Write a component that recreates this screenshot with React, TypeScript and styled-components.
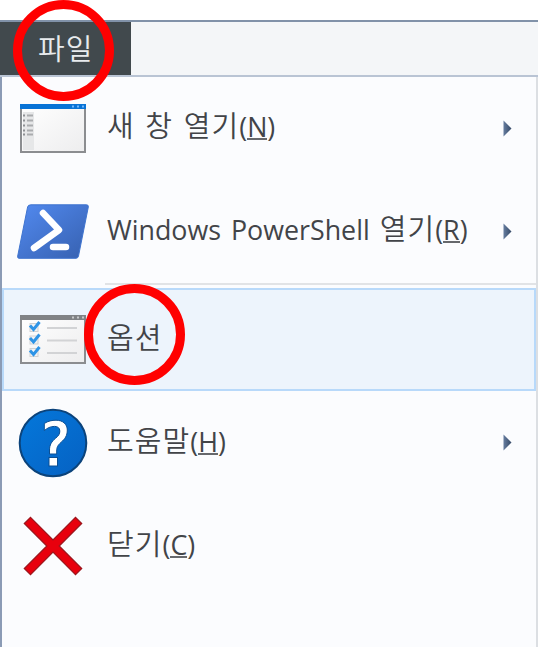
import React from "react";
import styled, { createGlobalStyle } from "styled-components";

const GlobalStyle = createGlobalStyle`
  * { box-sizing: border-box; }
  html, body { margin: 0; background: #fff; overflow: hidden; }
`;

const Window = styled.div`
  width: 538px;
  height: 647px;
  padding-top: 20px;
  display: flex;
  flex-direction: column;
  background: #fff;
  overflow: hidden;
  color: #424448;
  font-family: "Open Sans", "Noto Sans CJK KR", sans-serif;
`;

const TabBar = styled.div`
  height: 57px;
  flex: none;
  display: flex;
  border-top: 2px solid #8192a9;
  border-bottom: 2px solid #b9c4d4;
  background: #f4f6f8;
`;

const FileTab = styled.div`
  position: relative;
  width: 131px;
  display: flex;
  align-items: center;
  padding: 0 0 3px 38px;
  background: #41494d;
  color: #e8ebed;
`;

const Menu = styled.div`
  flex: 1;
  display: flex;
  flex-direction: column;
  border-left: 2px solid #8b9bb5;
  border-right: 2px solid #dcdfe3;
  background: #fbfcfe;
`;

const Item = styled.div<{ $selected?: boolean; $height?: number }>`
  position: relative;
  flex: none;
  height: ${(p) => p.$height ?? 103}px;
  display: grid;
  grid-template-columns: 103px 1fr 31px;
  align-items: center;
  border: 2px solid ${(p) => (p.$selected ? "#b8d9fa" : "transparent")};
  background: ${(p) => (p.$selected ? "#edf4fc" : "transparent")};
`;

const IconCell = styled.div`
  display: flex;
  justify-content: center;
  align-items: center;
  width: 98px;
  svg { display: block; flex: none; }
`;

const Label = styled.div`
  display: flex;
  align-items: baseline;
  white-space: pre;
  line-height: 40px;
  height: 40px;
  word-spacing: 3px;
`;

const ItemLabel = styled(Label)`
  margin-bottom: 8px;
`;

const Hangul = styled.span`
  font-family: "Noto Sans CJK KR", sans-serif;
  font-size: 29px;
  font-weight: 350;
  letter-spacing: 1.1px;
`;

const Latin = styled.span`
  font-size: 26.8px;
  font-weight: 400;
`;

const AccessKey = styled.span`
  display: inline-block;
  line-height: 23px;
  border-bottom: 2px solid #66686c;
`;

const Separator = styled.div`
  flex: none;
  height: 2px;
  margin: 0 0 3px 103px;
  background: #e1e3e6;
`;

const Ring = styled.div<{ $left: number; $top: number; $size: number }>`
  position: absolute;
  z-index: 2;
  left: ${(p) => p.$left}px;
  top: ${(p) => p.$top}px;
  width: ${(p) => p.$size}px;
  height: ${(p) => p.$size}px;
  border: 9px solid #ff0000;
  border-radius: 50%;
`;

const WindowIcon = () => (
  <svg width="66" height="49" viewBox="0 0 66 49">
    <defs>
      <linearGradient id="pane" x1="0" y1="0" x2="1" y2="1">
        <stop offset="0" stopColor="#fff" />
        <stop offset="1" stopColor="#ededee" />
      </linearGradient>
    </defs>
    <rect x="1" y="1" width="64" height="47" fill="url(#pane)" stroke="#8b8d90" strokeWidth="2" />
    <rect x="3" y="8" width="11" height="38" fill="#e6e7e8" />
    <rect width="66" height="5" fill="#0873d6" />
    <path d="M52 2.5h2M57 2.5h2M62 2.5h2" stroke="#70b8ff" strokeWidth="2" />
    <path d="M3 11.5h2M3 16.5h2M3 21.5h2M3 26.5h2M3 30.5h2" stroke="#8d9093" strokeWidth="2" />
    <path d="M7 11.5h6M7 16.5h6M7 21.5h6M7 26.5h6M7 30.5h6" stroke="#aaacae" strokeWidth="2" />
  </svg>
);

const ShellIcon = () => (
  <svg width="72" height="55" viewBox="0 0 72 55">
    <defs>
      <linearGradient id="shell" x1="0" y1="0" x2="1" y2="1">
        <stop offset="0" stopColor="#528af0" />
        <stop offset="1" stopColor="#3660af" />
      </linearGradient>
    </defs>
    <path d="M14 .8H69.5Q71.7.8 71.3 3L61.5 52Q61 54.3 59 54.3H2Q.3 54.3.7 52L10.6 3Q11 .8 14 .8Z" fill="url(#shell)" stroke="#3f74cf" />
    <path d="M26 9L42 26L17 44" fill="none" stroke="#fff" strokeWidth="6.5" strokeLinecap="round" strokeLinejoin="round" />
    <path d="M36 43H49" stroke="#fff" strokeWidth="6.5" strokeLinecap="round" />
  </svg>
);

const OptionsIcon = () => (
  <svg width="66" height="49" viewBox="0 0 66 49">
    <rect x="1" y="1" width="64" height="47" fill="url(#pane)" stroke="#8b8d90" strokeWidth="2" />
    <rect width="66" height="5" fill="#808285" />
    <path d="M52 2.5h2M57 2.5h2M62 2.5h2" stroke="#c8cacc" strokeWidth="2" />
    {[7, 19.5, 32].map((y) => (
      <g key={y}>
        <rect x="10" y={y + 1.5} width="8" height="8" fill="#f2f3f4" stroke="#cfd1d3" />
        <path d={`M10 ${y + 3.5}L13.5 ${y + 7.5}L19.5 ${y}`} fill="none" stroke="#2e94e6" strokeWidth="3" />
        <path d={`M27 ${y + 6}H57`} stroke="#d2d3d5" strokeWidth="2" />
      </g>
    ))}
  </svg>
);

const HelpIcon = () => (
  <svg width="70" height="70" viewBox="0 0 70 70">
    <defs>
      <linearGradient id="help" x1="0" y1="0" x2="1" y2="1">
        <stop offset="0" stopColor="#0478db" />
        <stop offset="1" stopColor="#0661c2" />
      </linearGradient>
    </defs>
    <circle cx="35" cy="35" r="33.3" fill="url(#help)" stroke="#0b437b" strokeWidth="2" />
    <path d="M26.3 15.5C30 13 34 12.2 38 12.2C45 12.2 49.3 16.3 49.3 22C49.3 28 46.8 31 43.2 34.2C39.5 37.5 38.7 39.5 38.7 43V46H31.5V42C31.5 37 33.5 33.6 37.5 30.3C40.7 27.7 41.8 26 41.8 23C41.8 20 39.8 18.4 36.5 18.4C32.5 18.4 29.3 20 26.3 22.6Z" fill="#fff" stroke="#0b4f94" strokeWidth="1" />
    <rect x="31" y="49.5" width="8.5" height="8.5" fill="#fff" stroke="#0b4f94" />
  </svg>
);

const CloseIcon = () => (
  <svg width="60" height="60" viewBox="0 0 60 60">
    <path d="M7.5 1.3L30 23.8L52.5 1.3L58.7 7.5L36.2 30L58.7 52.5L52.5 58.7L30 36.2L7.5 58.7L1.3 52.5L23.8 30L1.3 7.5Z" fill="#e8000d" stroke="#9b151c" strokeWidth="1.2" />
  </svg>
);

const Arrow = () => (
  <svg width="9" height="17" viewBox="0 0 9 17">
    <defs>
      <linearGradient id="arrow">
        <stop offset="0" stopColor="#657c9f" />
        <stop offset="1" stopColor="#354966" />
      </linearGradient>
    </defs>
    <path d="M.5.5L8.5 8.5L.5 16.5Z" fill="url(#arrow)" />
  </svg>
);

const KeyHint = ({ letter }: { letter: string }) => (
  <Latin>
    (<AccessKey>{letter}</AccessKey>)
  </Latin>
);

export default function App() {
  return (
    <>
      <GlobalStyle />
      <Window>
        <TabBar>
          <FileTab>
            <Label><Hangul>파일</Hangul></Label>
            <Ring $left={13} $top={-22} $size={101} />
          </FileTab>
        </TabBar>
        <Menu>
          <Item $height={102}>
            <IconCell><WindowIcon /></IconCell>
            <ItemLabel><Hangul>새 창 열기</Hangul><KeyHint letter="N" /></ItemLabel>
            <Arrow />
          </Item>
          <Item $height={104}>
            <IconCell><ShellIcon /></IconCell>
            <ItemLabel><Latin>Windows PowerShell </Latin><Hangul>열기</Hangul><KeyHint letter="R" /></ItemLabel>
            <Arrow />
          </Item>
          <Separator />
          <Item $selected>
            <IconCell><OptionsIcon /></IconCell>
            <ItemLabel><Hangul>옵션</Hangul></ItemLabel>
            <Ring $left={80} $top={-6} $size={101} />
          </Item>
          <Item>
            <IconCell><HelpIcon /></IconCell>
            <ItemLabel><Hangul>도움말</Hangul><KeyHint letter="H" /></ItemLabel>
            <Arrow />
          </Item>
          <Item>
            <IconCell><CloseIcon /></IconCell>
            <ItemLabel><Hangul>닫기</Hangul><KeyHint letter="C" /></ItemLabel>
          </Item>
        </Menu>
      </Window>
    </>
  );
}
